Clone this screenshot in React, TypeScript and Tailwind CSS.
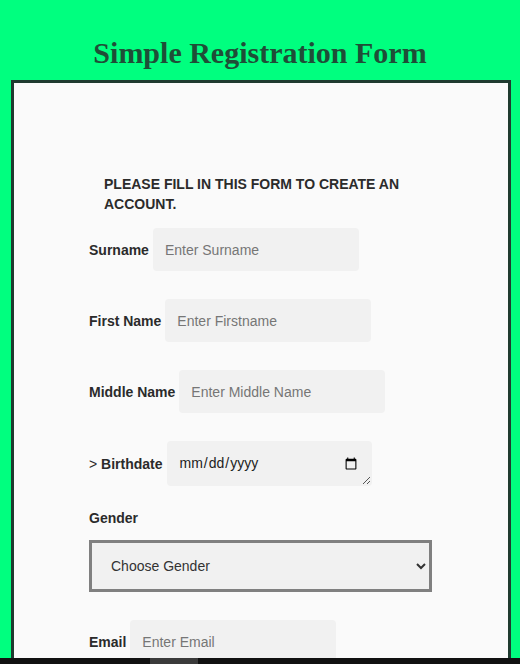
import React from 'react';

const font = { fontFamily: '"Liberation Sans", Arial, sans-serif' };

function TextRow({ label, placeholder, type = 'text' }: { label: string; placeholder: string; type?: string }) {
  return (
    <div className="flex items-center mb-[28px]">
      <label className="text-[14px] font-bold text-[#2b2b2b] mr-[4px] translate-y-[1px]">{label}</label>
      <input
        type={type}
        placeholder={placeholder}
        className="w-[206px] h-[43px] px-[12px] bg-[#f1f1f1] rounded-[4px] text-[14px] text-[#333] placeholder:text-[#767676] outline-none"
      />
    </div>
  );
}

export default function App() {
  return (
    <div className="min-h-screen bg-[#00ff7f] pt-[35px]" style={font}>
      <h1
        className="text-center text-[30px] leading-[36px] font-bold text-[#1f4e37] mb-[9px]"
        style={{ fontFamily: '"Liberation Serif", "Times New Roman", serif' }}
      >
        Simple Registration Form
      </h1>

      <div className="ml-[11px] w-[500px] border-[3px] border-[#1f3a2f] bg-[#fafafa] pt-[91px] pl-[75px] pb-[60px]">
        <form className="w-[360px]">
          <p className="ml-[15px] text-[14px] leading-[20px] font-bold uppercase text-[#2b2b2b] mb-[14px]">
            Please fill in this form to create an account.
          </p>

          <TextRow label="Surname" placeholder="Enter Surname" />
          <TextRow label="First Name" placeholder="Enter Firstname" />
          <TextRow label="Middle Name" placeholder="Enter Middle Name" />

          <div className="flex items-center mb-[24px]">
            <label className="text-[14px] text-[#2b2b2b] mr-[4px] translate-y-[1px]">
              &gt; <span className="font-bold">Birthdate</span>
            </label>
            <div className="relative">
              <input
                type="date"
                className="block w-[205px] h-[45px] px-[12px] bg-[#f1f1f1] rounded-[4px] text-[14px] text-[#222] outline-none"
              />
              <svg className="absolute right-[1px] bottom-[1px] pointer-events-none" width="9" height="9" viewBox="0 0 9 9">
                <path d="M8 1 L1 8 M8 5 L5 8" stroke="#555" strokeWidth="1" />
              </svg>
            </div>
          </div>

          <label className="block text-[14px] leading-[16px] font-bold text-[#2b2b2b] mb-[14px]">Gender</label>
          <select
            defaultValue=""
            className="block w-[343px] h-[52px] border-[3px] border-[#808080] bg-[#f1f1f1] pl-[15px] pr-[9px] text-[14px] text-[#333] mb-[28px] outline-none"
          >
            <option value="">Choose Gender</option>
            <option value="male">Male</option>
            <option value="female">Female</option>
          </select>

          <TextRow label="Email" placeholder="Enter Email" type="email" />
          <TextRow label="Password" placeholder="Enter Password" type="password" />

          <button type="button" className="mt-2 px-6 py-3 bg-[#1f4e37] text-white text-[14px] font-bold rounded-[4px]">
            Register
          </button>
        </form>
      </div>

      <div className="fixed bottom-0 left-0 right-0 h-[6px] bg-[#111]">
        <div className="ml-[150px] w-[48px] h-full bg-[#3a3a3a]" />
      </div>
    </div>
  );
}
